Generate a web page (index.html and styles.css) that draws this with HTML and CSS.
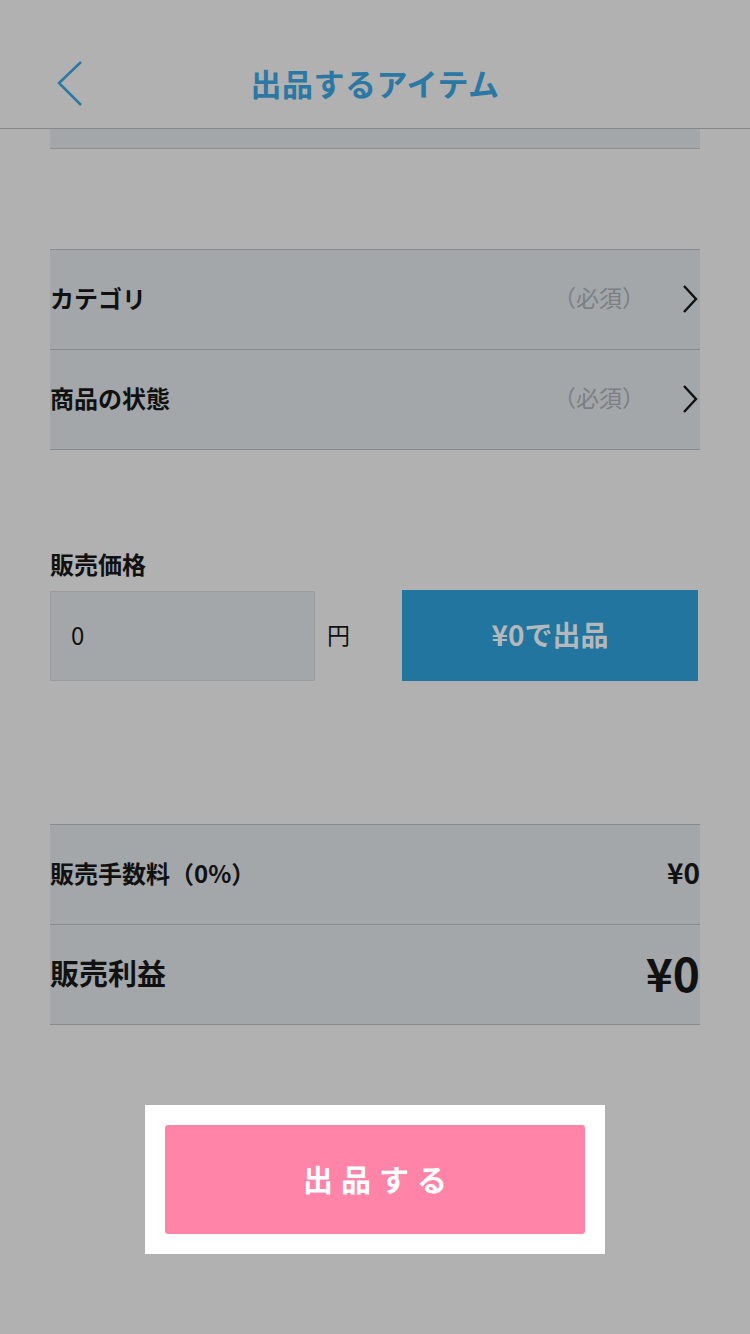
FILE: index.html
```html
<!DOCTYPE html>
<html lang="ja">
<head>
    <meta charset="UTF-8">
    <meta name="viewport" content="width=device-width, initial-scale=1.0">
    <title>出品するアイテム</title>
    <link rel="stylesheet" href="styles.css">
</head>
<body>
    <header class="topbar">
        <a class="back" href="#">
            <svg width="30" height="48" viewBox="0 0 30 48"><path d="M25 2 L3 23 L25 45" fill="none" stroke="#2a78a3" stroke-width="2.5"/></svg>
        </a>
        <h1>出品するアイテム</h1>
    </header>

    <div class="card card-tail"></div>

    <div class="card rows">
        <div class="row">
            <span class="label">カテゴリ</span>
            <span class="hint">（必須）</span>
            <svg class="chev" width="18" height="30" viewBox="0 0 18 30"><path d="M3 2 L15 15 L3 28" fill="none" stroke="#111" stroke-width="2.4"/></svg>
        </div>
        <div class="row">
            <span class="label">商品の状態</span>
            <span class="hint">（必須）</span>
            <svg class="chev" width="18" height="30" viewBox="0 0 18 30"><path d="M3 2 L15 15 L3 28" fill="none" stroke="#111" stroke-width="2.4"/></svg>
        </div>
    </div>

    <section class="price">
        <div class="price-label">販売価格</div>
        <div class="price-row">
            <div class="price-input">0</div>
            <span class="yen">円</span>
            <button class="quick">¥0で出品</button>
        </div>
    </section>

    <div class="card rows fees">
        <div class="row">
            <span class="label">販売手数料（0%）</span>
            <span class="amount">¥0</span>
        </div>
        <div class="row">
            <span class="label big">販売利益</span>
            <span class="amount big">¥0</span>
        </div>
    </div>

    <div class="submit-wrap">
        <button class="submit">出品する</button>
    </div>
</body>
</html>
```

FILE: styles.css
```css
body {
    margin: 0;
    width: 750px;
    height: 1334px;
    background-color: #b1b1b1;
    font-family: "Noto Sans CJK JP", "Noto Sans", sans-serif;
    color: #111;
    overflow: hidden;
}
.topbar {
    height: 128px;
    border-bottom: 1px solid #858789;
    display: flex;
    align-items: center;
    justify-content: center;
    position: relative;
}
.back {
    position: absolute;
    left: 56px;
    top: 60px;
    display: block;
    line-height: 0;
}
.topbar h1 {
    margin: 36px 0 0;
    font-size: 31px;
    font-weight: bold;
    color: #2a78a3;
    letter-spacing: 0.5px;
}
.card {
    margin: 0 50px;
    background-color: #a3a7aa;
}
.card-tail {
    height: 19px;
    border-bottom: 1px solid #8d9194;
}
.rows {
    margin-top: 100px;
    border-bottom: 1px solid #878b8e;
}
.row {
    height: 99px;
    border-top: 1px solid #878b8e;
    display: flex;
    align-items: center;
}
.label {
    font-size: 24px;
    font-weight: bold;
    flex: 1;
    padding-bottom: 5px;
}
.hint {
    font-size: 23px;
    color: #7b7f82;
    margin-right: 36px;
    padding-bottom: 5px;
}
.chev {
    margin-right: 1px;
    margin-bottom: 2px;
}
.price {
    margin: 98px 50px 0;
}
.price-label {
    font-size: 24px;
    font-weight: bold;
    line-height: 32px;
    margin-bottom: 10px;
}
.price-row {
    display: flex;
    align-items: center;
}
.price-input {
    width: 243px;
    height: 88px;
    border: 1px solid #989c9f;
    background-color: #a3a7aa;
    padding-left: 20px;
    font-size: 24px;
    line-height: 86px;
}
.yen {
    font-size: 23px;
    margin-left: 12px;
    width: 75px;
    padding-bottom: 4px;
}
.quick {
    width: 296px;
    height: 91px;
    border: none;
    background-color: #21759e;
    color: #b5b8ba;
    font-family: inherit;
    font-size: 28px;
    font-weight: bold;
    padding: 0 0 4px;
}
.fees {
    margin-top: 143px;
}
.amount {
    font-size: 28px;
    font-weight: bold;
    padding-bottom: 5px;
}
.label.big {
    font-size: 29px;
}
.amount.big {
    font-size: 46px;
    padding-bottom: 6px;
}
.submit-wrap {
    width: 420px;
    margin: 80px auto 0;
    padding: 20px;
    background-color: #fff;
}
.submit {
    display: block;
    width: 420px;
    height: 109px;
    border: none;
    border-radius: 3px;
    background-color: #ff84a7;
    color: #fff;
    font-family: inherit;
    font-size: 30px;
    font-weight: bold;
    letter-spacing: 8px;
    padding: 0 0 4px 8px;
}
```
